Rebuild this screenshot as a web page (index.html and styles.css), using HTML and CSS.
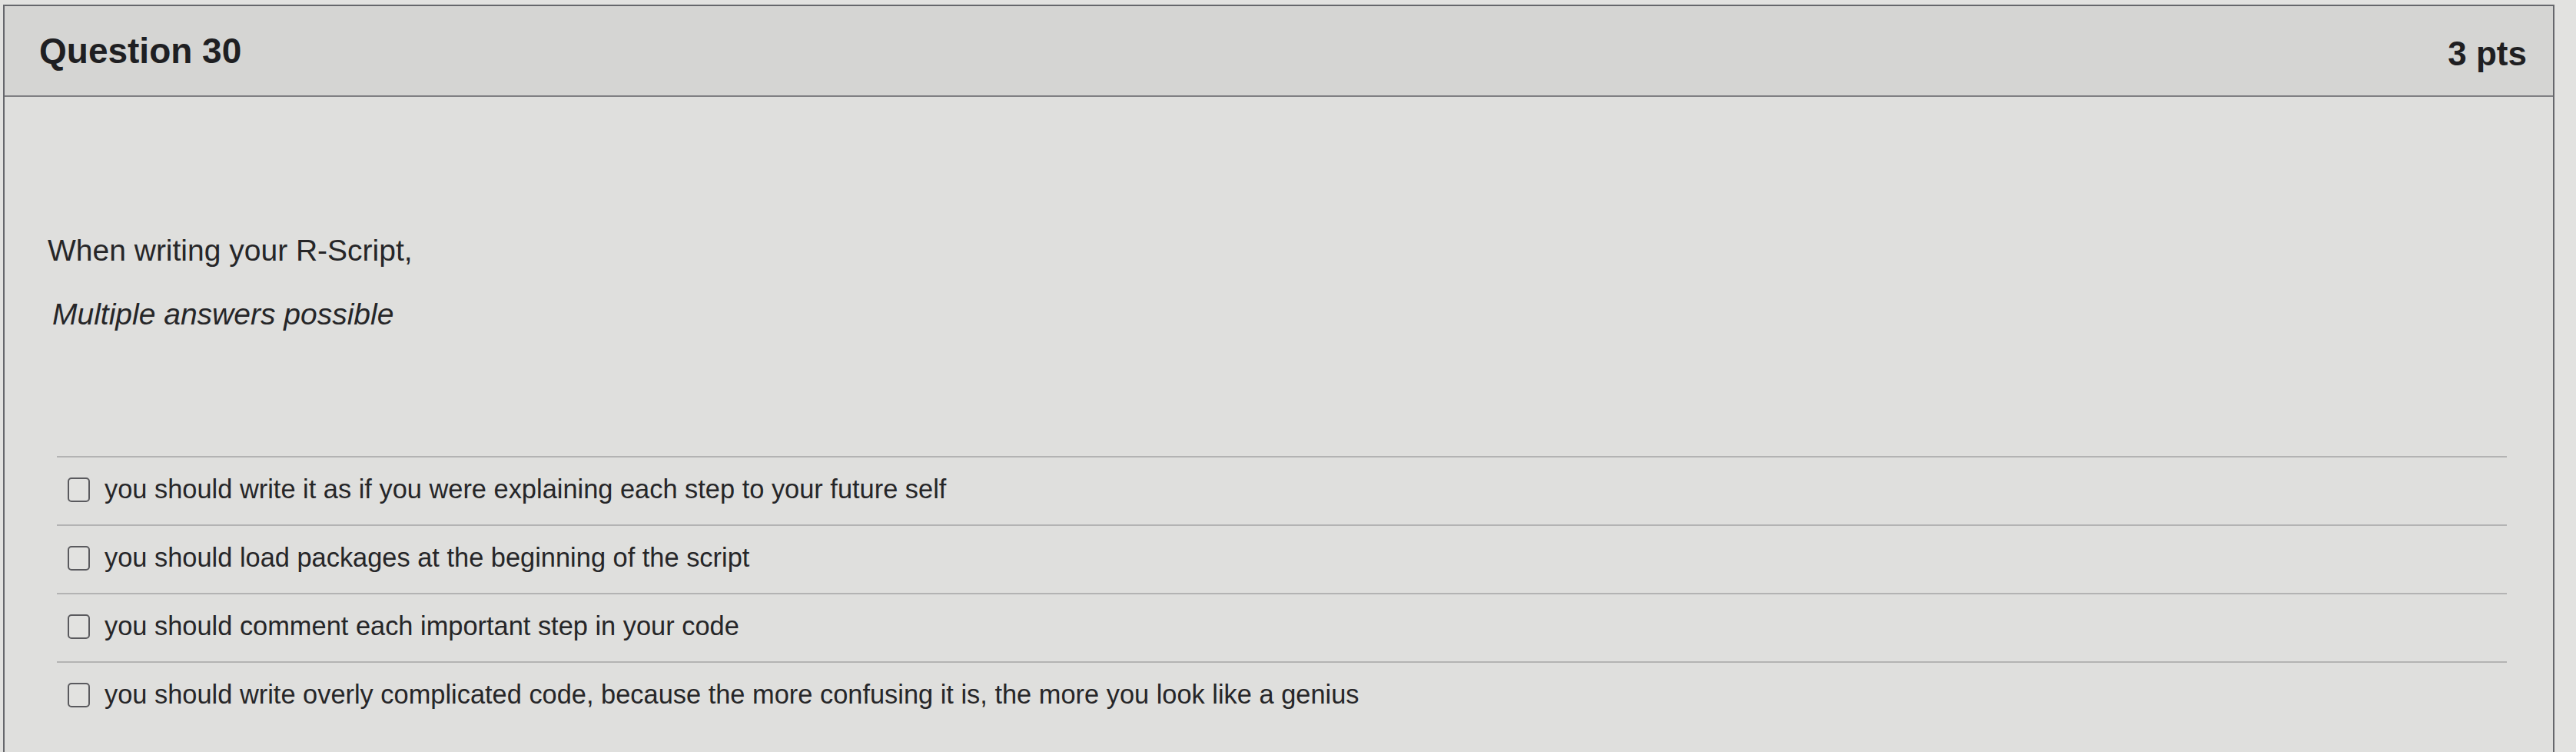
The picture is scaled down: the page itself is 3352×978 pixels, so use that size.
FILE: index.html
```html
<!DOCTYPE html>
<html lang="en">
<head>
<meta charset="utf-8">
<title>Question 30</title>
<link rel="stylesheet" href="styles.css">
</head>
<body>
<div class="card">
  <div class="header">
    <h2 class="title">Question 30</h2>
    <span class="pts">3 pts</span>
  </div>
  <div class="content">
    <p class="prompt">When writing your R-Script,</p>
    <p class="hint">Multiple answers possible</p>
    <div class="answers">
      <label class="answer"><span class="box"></span><span class="label">you should write it as if you were explaining each step to your future self</span></label>
      <label class="answer"><span class="box"></span><span class="label">you should load packages at the beginning of the script</span></label>
      <label class="answer"><span class="box"></span><span class="label">you should comment each important step in your code</span></label>
      <label class="answer last"><span class="box"></span><span class="label">you should write overly complicated code, because the more confusing it is, the more you look like a genius</span></label>
    </div>
  </div>
</div>
</body>
</html>
```
FILE: styles.css
```css
html, body {
  margin: 0;
  padding: 0;
  height: 100%;
  overflow: hidden;
}
body {
  background: #e2e2e0;
  font-family: "Liberation Sans", Arial, Helvetica, sans-serif;
  color: #262628;
}
.card {
  margin: 6px 0 0 4px;
  width: 3320px;
  height: calc(100vh - 6px);
  box-sizing: border-box;
  border: 2px solid #66676c;
  border-bottom: none;
  background: #dfdfdd;
  overflow: hidden;
}
.header {
  height: 118px;
  box-sizing: border-box;
  background: #d5d5d3;
  border-bottom: 2px solid #808083;
  display: flex;
  align-items: center;
  justify-content: space-between;
  padding: 0 34px 0 45px;
}
.title {
  margin: 0;
  font-size: 46px;
  font-weight: bold;
  color: #1f1f22;
}
.pts {
  font-size: 44px;
  font-weight: bold;
  color: #1f1f22;
  margin-top: 8px;
}
.content {
  padding: 176px 60px 0 56px;
}
.prompt {
  margin: 0;
  font-size: 39px;
  line-height: 47px;
}
.hint {
  margin: 36px 0 0 6px;
  font-size: 39px;
  line-height: 47px;
  font-style: italic;
}
.answers {
  margin: 161px 0 0 12px;
}
.answer {
  display: flex;
  align-items: center;
  gap: 19px;
  height: 89px;
  box-sizing: border-box;
  border-top: 2px solid #b3b3b3;
  padding-left: 14px;
  padding-bottom: 4px;
  font-size: 34.4px;
  color: #262628;
}
.box {
  width: 25px;
  height: 28px;
  border: 2.5px solid #5a5a5e;
  border-radius: 5px;
  background: #e2e2e0;
  flex: none;
}
```
